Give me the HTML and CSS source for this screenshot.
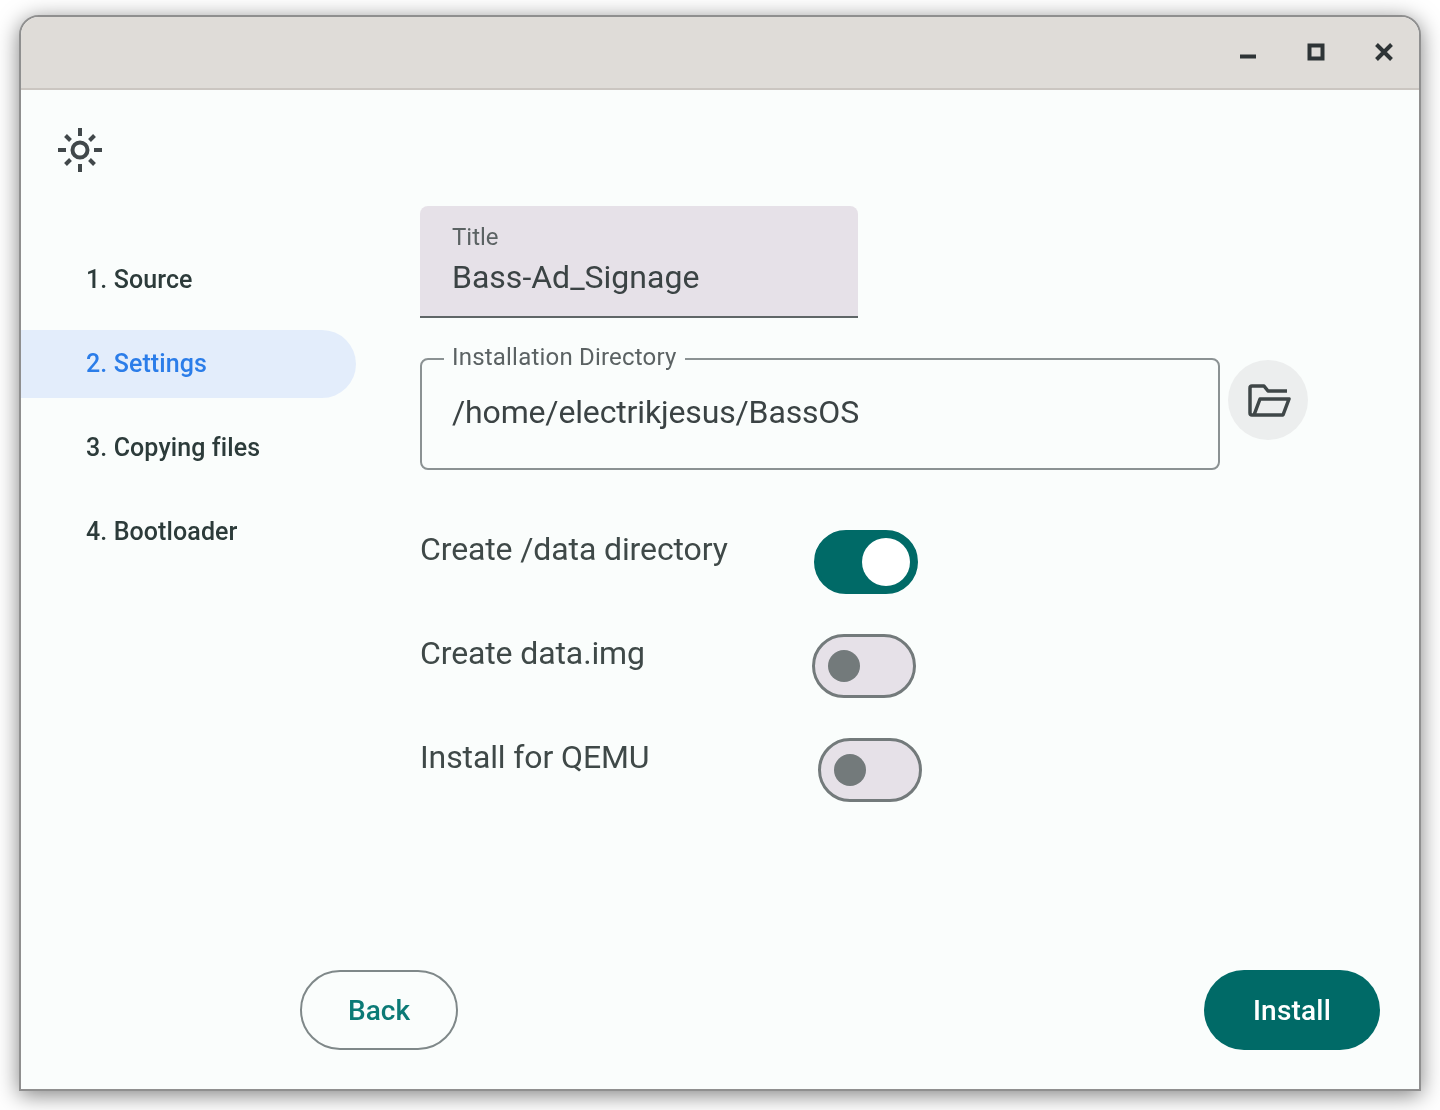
FILE: index.html
```html
<!DOCTYPE html>
<html lang="en">
<head>
   <meta charset="UTF-8">
   <meta name="viewport" content="width=device-width, initial-scale=1.0">
   <title>Installer - Settings</title>
   <link rel="stylesheet" href="styles.css">
</head>
<body>

   <div class="window">

      <!-- title bar -->
      <header class="titlebar">
         <button class="win-btn" aria-label="Minimize">
            <svg width="20" height="20" viewBox="0 0 20 20"><path d="M2 14.500h16" class="win-icon"/></svg>
         </button>
         <button class="win-btn" aria-label="Maximize">
            <svg width="20" height="20" viewBox="0 0 20 20"><rect x="3.500" y="3.500" width="13" height="13" class="win-icon"/></svg>
         </button>
         <button class="win-btn" aria-label="Close">
            <svg width="20" height="20" viewBox="0 0 20 20"><path d="M2.500 2.500l15 15M17.500 2.500l-15 15" class="win-icon"/></svg>
         </button>
      </header>

      <div class="content">
         <div class="columns">

            <!-- steps -->
            <aside class="sidebar">
               <svg class="theme-icon" width="48" height="48" viewBox="0 0 48 48">
                  <circle cx="24" cy="24" r="7.500"/>
                  <path d="M24 2v8M24 38v8M2 24h8M38 24h8M9.500 9.500l5 5M33.500 33.500l5 5M38.500 9.500l-5 5M14.500 33.500l-5 5"/>
               </svg>
               <nav class="steps">
                  <a class="step">1. Source</a>
                  <a class="step active">2. Settings</a>
                  <a class="step">3. Copying files</a>
                  <a class="step">4. Bootloader</a>
               </nav>
            </aside>

            <!-- settings form -->
            <main class="form">
               <div class="filled-field">
                  <label class="filled-label">Title</label>
                  <div class="filled-value">Bass-Ad_Signage</div>
               </div>

               <div class="dir-row">
                  <fieldset class="outlined-field">
                     <legend>Installation Directory</legend>
                     <div class="outlined-value">/home/electrikjesus/BassOS</div>
                  </fieldset>
                  <button class="folder-btn" aria-label="Choose folder">
                     <svg width="48" height="48" viewBox="0 0 48 48">
                        <path d="M43 15H24l-4-5H8a2 2 0 0 0-2 2v25a2 2 0 0 0 2 2h31l6-16H16l-6 16"/>
                     </svg>
                  </button>
               </div>

               <div class="switch-row">
                  <span class="switch-label">Create /data directory</span>
                  <span class="switch on"></span>
               </div>
               <div class="switch-row">
                  <span class="switch-label">Create data.img</span>
                  <span class="switch shift-left"></span>
               </div>
               <div class="switch-row">
                  <span class="switch-label">Install for QEMU</span>
                  <span class="switch shift-right"></span>
               </div>
            </main>
         </div>

         <footer class="footer">
            <button class="btn btn-outline">Back</button>
            <button class="btn btn-filled">Install</button>
         </footer>
      </div>
   </div>

</body>
</html>
```

FILE: styles.css
```css
* {
   box-sizing: border-box;
}

body {
   margin: 0;
   height: 1110px;
   padding: 15px 19px 19px;
   background-color: #ffffff;
   font-family: Roboto, sans-serif;
   color: #3f4948;
   overflow: hidden;
}

button {
   font-family: inherit;
   cursor: pointer;
}

.window {
   height: 1076px;
   display: flex;
   flex-direction: column;
   background-color: #fafdfc;
   border: 2px solid #8f8f8f;
   border-radius: 20px 20px 0 0;
   box-shadow: 0 4px 22px rgba(0, 0, 0, 0.5);
   overflow: hidden;
   filter: blur(0.4px);
}

.titlebar {
   flex: none;
   height: 73px;
   display: flex;
   justify-content: flex-end;
   align-items: center;
   gap: 48px;
   padding: 0 25px 2px 0;
   background-color: #dfdcd8;
   border-bottom: 2px solid #cbc6c1;
}

.win-btn {
   width: 20px;
   height: 20px;
   padding: 0;
   border: none;
   background: none;
}

.win-icon {
   fill: none;
   stroke: #2e3436;
   stroke-width: 4;
}

.content {
   flex: 1;
   display: flex;
   flex-direction: column;
}

.columns {
   flex: 1;
   display: flex;
}

.sidebar {
   flex: none;
   width: 399px;
   padding-top: 36px;
}

.theme-icon {
   display: block;
   margin-left: 35px;
   fill: none;
   stroke: #41484a;
   stroke-width: 4;
}

.steps {
   margin-top: 72px;
}

.step {
   display: flex;
   align-items: center;
   width: 335px;
   height: 68px;
   margin-bottom: 16px;
   padding: 0 0 2px 65px;
   border-radius: 0 34px 34px 0;
   font-size: 25px;
   font-weight: 500;
   letter-spacing: 0.1px;
   color: #2c3b3a;
}

.step.active {
   background-color: #e3edfb;
   color: #2b7de9;
}

.form {
   flex: 1;
   padding-top: 116px;
}

.filled-field {
   width: 438px;
   height: 112px;
   padding: 16px 32px 0;
   background-color: #e6e1e8;
   border-radius: 8px 8px 0 0;
   border-bottom: 2px solid #5f6667;
}

.filled-label {
   display: block;
   font-size: 24px;
   line-height: 30px;
   color: #5b6263;
}

.filled-value {
   margin-top: 5px;
   font-size: 32px;
   line-height: 40px;
   color: #3b4344;
}

.dir-row {
   display: flex;
   align-items: flex-start;
   gap: 8px;
   margin-top: 26px;
}

.outlined-field {
   width: 800px;
   height: 127px;
   margin: -1px 0 0;
   padding: 0 30px;
   border: 2px solid #8b9293;
   border-radius: 8px;
}

.outlined-field legend {
   padding: 0 8px 4px;
   margin-left: -8px;
   font-size: 24px;
   line-height: 28px;
   letter-spacing: 0.2px;
   color: #5b6263;
}

.outlined-value {
   margin-top: 17px;
   font-size: 32px;
   line-height: 40px;
   letter-spacing: -0.15px;
   color: #3b4344;
}

.folder-btn {
   width: 80px;
   height: 80px;
   margin-top: 16px;
   padding: 0;
   display: flex;
   align-items: center;
   justify-content: center;
   border: none;
   border-radius: 50%;
   background-color: #eceeee;
}

.folder-btn svg {
   fill: none;
   stroke: #3f4748;
   stroke-width: 3.500;
   stroke-linejoin: round;
}

.switch-row {
   display: flex;
   align-items: flex-start;
   height: 64px;
   margin-top: 40px;
}

.dir-row + .switch-row {
   margin-top: 60px;
}

.switch-label {
   flex: none;
   width: 394px;
   font-size: 32px;
   line-height: 38px;
   letter-spacing: -0.12px;
}

.switch {
   position: relative;
   flex: none;
   width: 104px;
   height: 64px;
   background-color: #e6e1e8;
   border: 3px solid #737a7b;
   border-radius: 32px;
}

/* knob */
.switch::after {
   content: "";
   position: absolute;
   top: 13px;
   left: 13px;
   width: 32px;
   height: 32px;
   border-radius: 50%;
   background-color: #737a7b;
}

.switch.on {
   background-color: #006a67;
   border-color: #006a67;
}

.switch.on::after {
   top: 5px;
   left: 45px;
   width: 48px;
   height: 48px;
   background-color: #ffffff;
}

.shift-left {
   margin-left: -2px;
}

.shift-right {
   margin-left: 4px;
}

.footer {
   flex: none;
   display: flex;
   justify-content: space-between;
   padding: 0 39px 39px 279px;
}

.btn {
   height: 80px;
   border-radius: 40px;
   font-size: 28px;
   font-weight: 500;
}

.btn-outline {
   width: 158px;
   background: none;
   border: 2px solid #7f8889;
   color: #0b7a76;
}

.btn-filled {
   width: 176px;
   background-color: #006a67;
   border: none;
   color: #ffffff;
   letter-spacing: 0.2px;
}
```
